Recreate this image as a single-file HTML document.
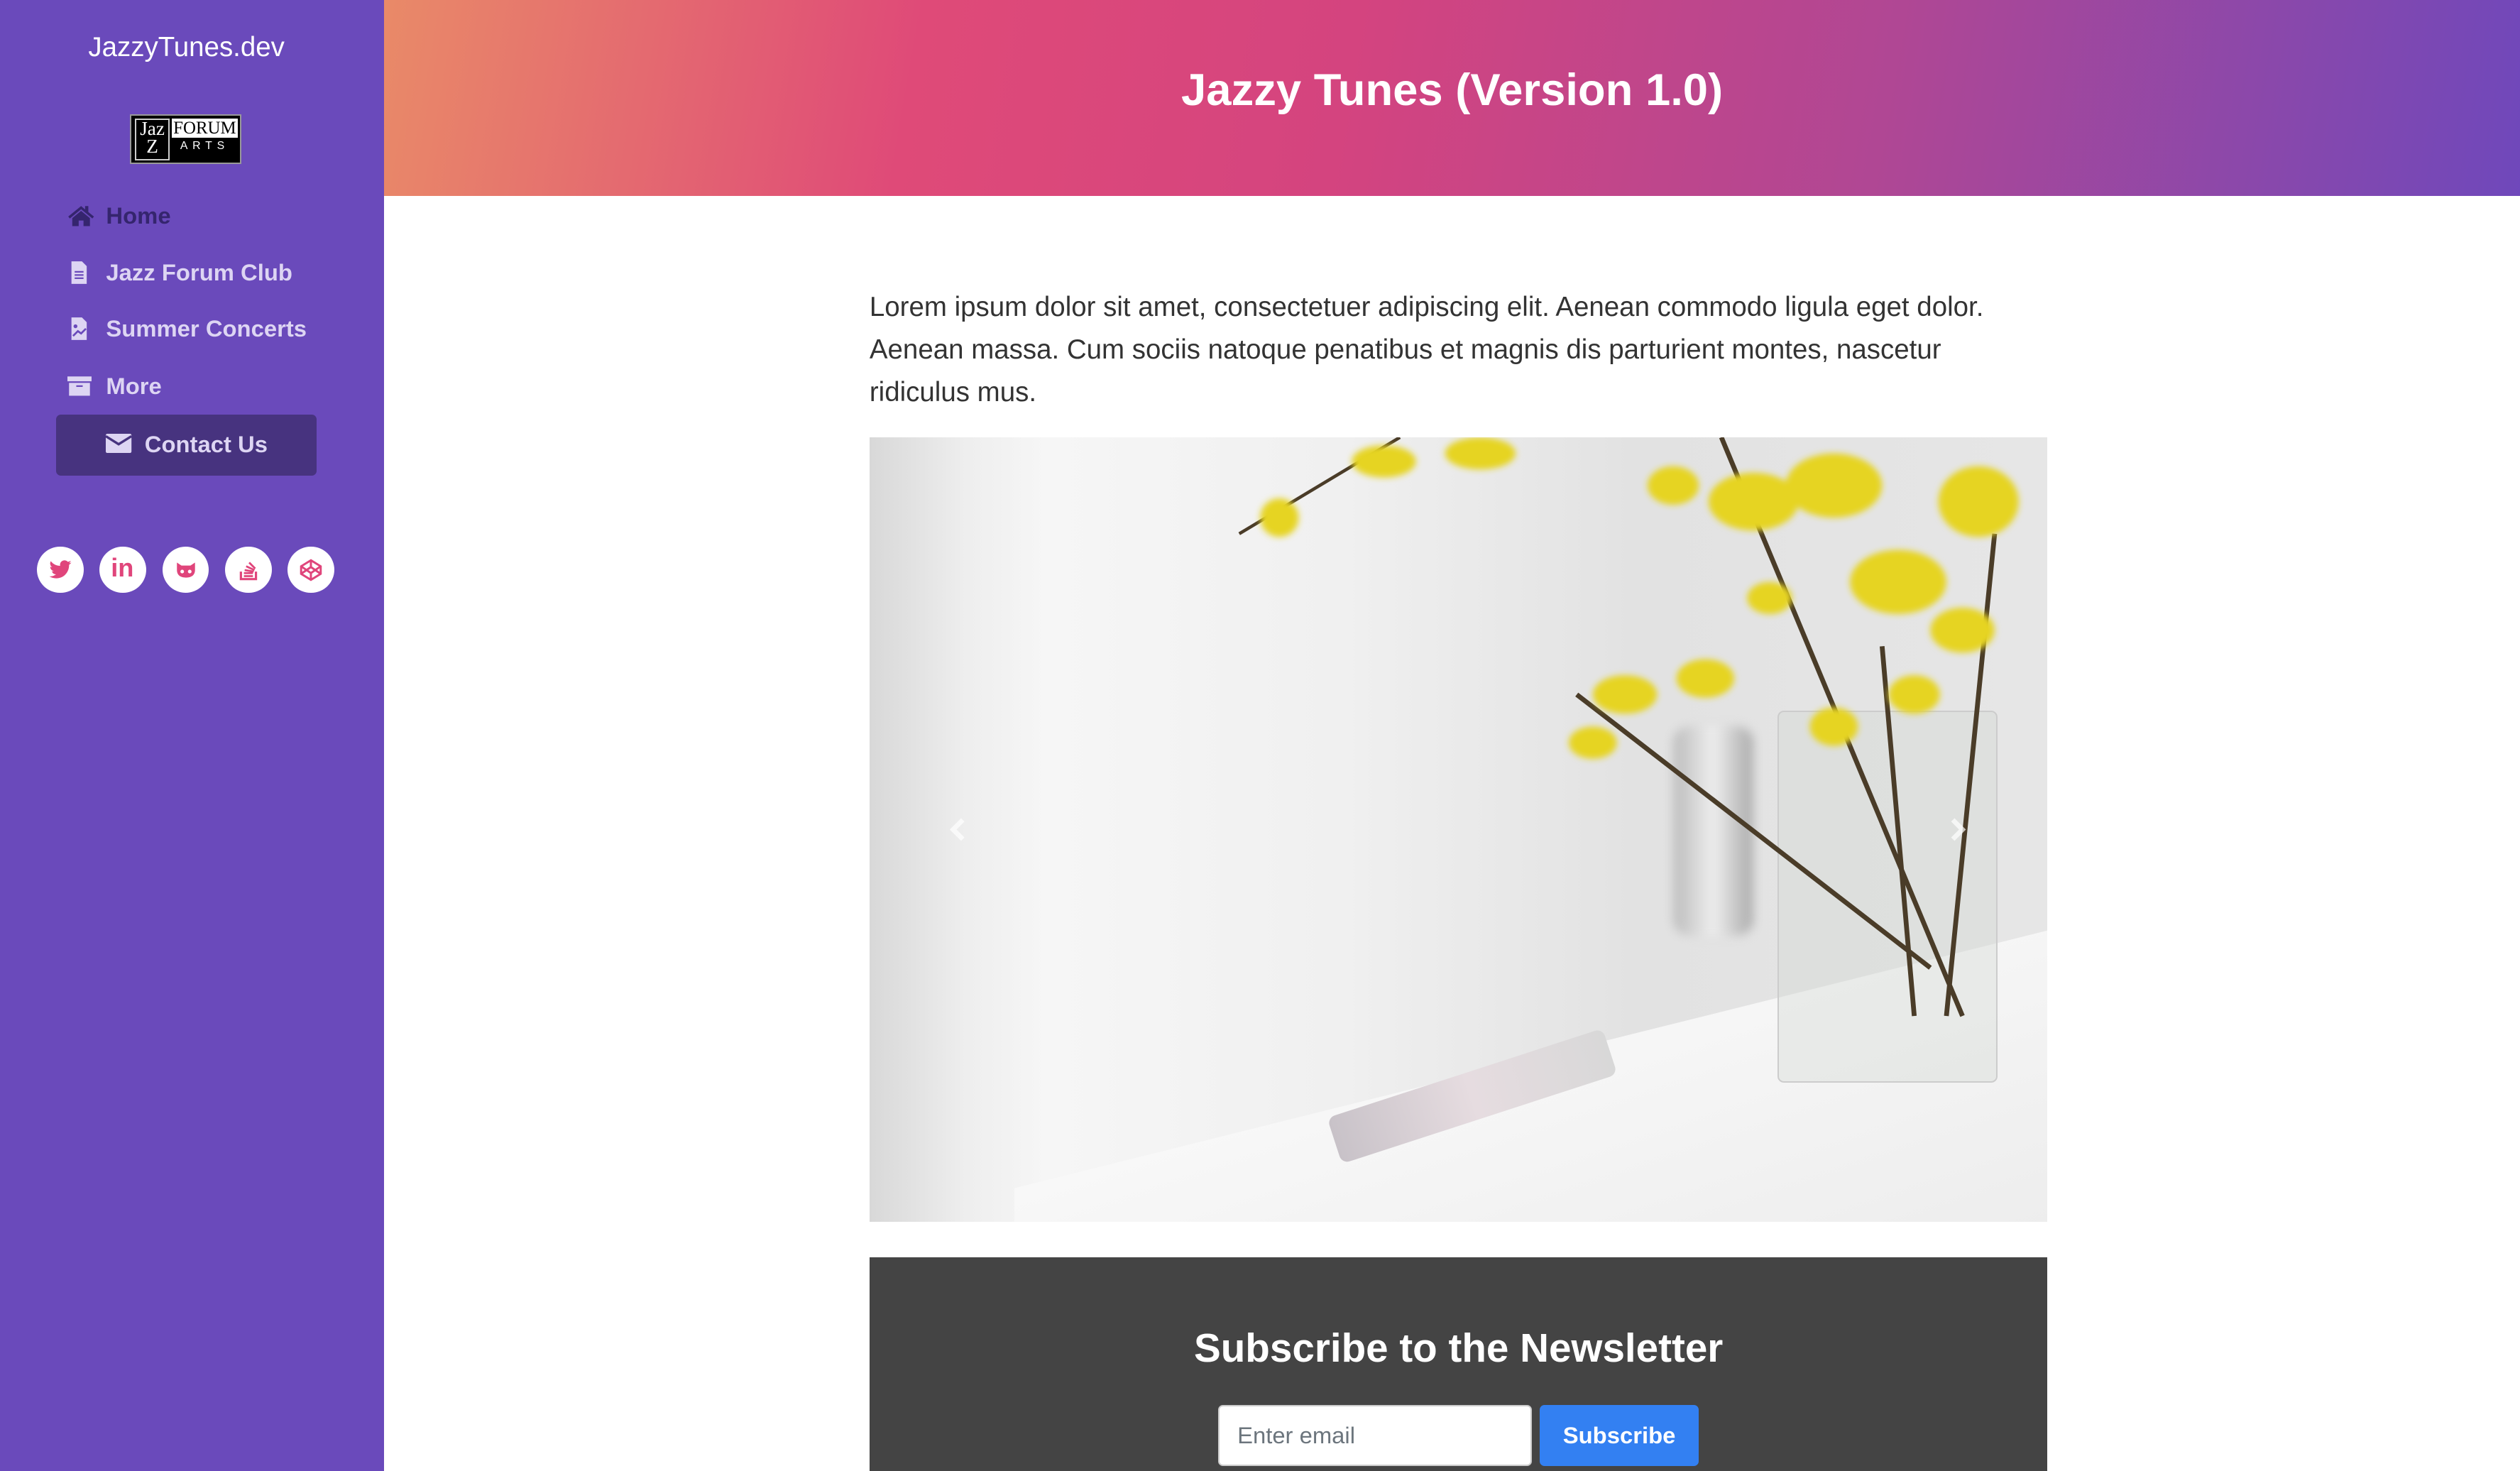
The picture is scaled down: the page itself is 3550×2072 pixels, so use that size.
<!DOCTYPE html>
<html><head><meta charset="utf-8"><style>
html{zoom:2.2641;height:915px;overflow:hidden;background:#fff}
body{margin:0;width:1568px;height:915px;overflow:hidden;font-family:"Liberation Sans",sans-serif;background:#fff;position:relative}
.sb{position:absolute;left:0;top:0;width:239px;height:915px;background:#6a4abb}
.brand{position:absolute;top:20px;width:232px;text-align:center;color:#fff;font-size:17px}
.logo{position:absolute;left:81px;top:71px;width:69px;height:31px;background:#000;border:1px solid #999;box-sizing:border-box}
.nav{position:absolute;left:42px;font-size:14.5px;font-weight:bold;color:#ddd5f3}
.nav svg{position:absolute;left:0;top:1px}
.nav span{position:absolute;left:24px;white-space:nowrap}
.contact{position:absolute;left:35px;top:258px;width:162px;height:38px;background:#47337f;border-radius:3px;color:#ddd5f3;font-weight:bold;font-size:14.5px}
.soc{position:absolute;top:340px;width:29px;height:29px;border-radius:50%;background:#fff}
.soc svg{position:absolute;left:7px;top:7px}
.hdr{position:absolute;left:239px;top:0;width:1329px;height:122px;background:linear-gradient(100deg,#e98a68 0%,#df4a78 25%,#d4447f 45%,#b04794 70%,#6f48bb 100%)}
.hdr h1{margin:0;position:absolute;width:100%;top:40px;text-align:center;color:#fff;font-size:28px}
.txt{position:absolute;left:541px;top:178px;width:720px;font-size:17px;line-height:26.5px;color:#333}
.img{position:absolute;left:541px;top:272px;width:733px;height:488px;overflow:hidden;background:linear-gradient(90deg,#e4e4e4 0%,#f6f6f6 15%,#f0f0f0 40%,#e2e2e2 65%,#e6e6e6 100%)}
.news{position:absolute;left:541px;top:782px;width:733px;height:133px;background:#444}
.news h2{margin:0;position:absolute;top:42px;width:100%;text-align:center;color:#fff;font-size:25px}
.inp{position:absolute;left:217px;top:92px;width:195px;height:38px;background:#fff;border:1px solid #ccc;border-radius:3px;box-sizing:border-box;color:#6c757d;font-size:14.5px;padding:10px 11px}
.btn{position:absolute;left:417px;top:92px;width:99px;height:38px;background:#3380f2;border-radius:3px;color:#fff;font-weight:bold;font-size:14.5px;text-align:center;line-height:38px}
</style></head><body>
<div class="sb">
<div class="brand">JazzyTunes.dev</div>
<div class="logo">
<div style="position:absolute;left:2px;top:2px;width:20px;height:24px;border:1px solid #ccc;color:#fff;font-family:'Liberation Serif',serif;font-size:12px;line-height:11px;text-align:center">Jaz<br>Z</div>
<div style="position:absolute;left:25px;top:2px;width:41px;height:12px;background:#fff;color:#000;font-family:'Liberation Serif',serif;font-size:11px;line-height:12px;text-align:center">FORUM</div>
<div style="position:absolute;left:25px;top:15px;width:41px;color:#fff;font-size:7px;letter-spacing:3px;text-align:center">ARTS</div>
</div>
<div class="nav" style="top:126px;color:#35256e"><svg width="17" height="14" viewBox="0 0 17 14"><path d="M8.5 1L0.5 7.5 1.5 8.7 8.5 3 15.5 8.7 16.5 7.5 13 4.7V1h-2v2.1z M3 8.5V13.5h4v-3.5h3v3.5h4V8.5L8.5 4z" fill="#35256e"/></svg><span>Home</span></div>
<div class="nav" style="top:161px"><svg width="17" height="15" viewBox="0 0 17 15"><path d="M2.5 0.5h6.5l3 3v11h-9.5z" fill="#ddd5f3"/><path d="M4.5 7h5.5M4.5 9h5.5M4.5 11h5.5" stroke="#6a4abb" stroke-width="1"/></svg><span>Jazz Forum Club</span></div>
<div class="nav" style="top:196px"><svg width="17" height="15" viewBox="0 0 17 15"><path d="M2.5 0.5h6.5l3 3v11h-9.5z" fill="#ddd5f3"/><circle cx="5" cy="6" r="1.2" fill="#6a4abb"/><path d="M3.5 12l3-3 2 1.5 3-3" stroke="#6a4abb" stroke-width="1.2" fill="none"/></svg><span>Summer Concerts</span></div>
<div class="nav" style="top:232px"><svg width="17" height="15" viewBox="0 0 17 15"><rect x="0" y="1" width="15" height="3" fill="#ddd5f3"/><rect x="1" y="5" width="13" height="8" fill="#ddd5f3"/><rect x="5.5" y="6.5" width="4" height="1" fill="#6a4abb"/></svg><span>More</span></div>
<div class="contact"><svg style="position:absolute;left:31px;top:12px" width="16" height="12" viewBox="0 0 16 12"><rect x="0" y="0" width="16" height="12" rx="1" fill="#ddd5f3"/><path d="M0 1.5l8 5 8-5" stroke="#47337f" stroke-width="1.5" fill="none"/></svg><span style="position:absolute;left:55px;top:10px">Contact Us</span></div>
<div class="soc" style="left:23px"><svg width="15" height="15" viewBox="0 0 24 24"><path d="M23 4.5a9 9 0 0 1-2.6.7 4.5 4.5 0 0 0 2-2.5 9 9 0 0 1-2.9 1.1A4.5 4.5 0 0 0 11.8 7.9 12.8 12.8 0 0 1 2.5 3.2a4.5 4.5 0 0 0 1.4 6 4.5 4.5 0 0 1-2-.6 4.5 4.5 0 0 0 3.6 4.5 4.5 4.5 0 0 1-2 .1 4.5 4.5 0 0 0 4.2 3.1A9 9 0 0 1 1 18.2 12.8 12.8 0 0 0 7.9 20.2c8.3 0 12.8-6.9 12.8-12.8v-.6A9 9 0 0 0 23 4.5z" fill="#e0457b"/></svg></div>
<div class="soc" style="left:62px"><span style="position:absolute;left:7px;top:4px;color:#e0457b;font-weight:bold;font-size:16px">in</span></div>
<div class="soc" style="left:101px"><svg width="15" height="15" viewBox="0 0 16 16"><path d="M2 3l3 2h6l3-2v5c0 3-2 5-6 5s-6-2-6-5z" fill="#e0457b"/><circle cx="5.5" cy="9" r="1.2" fill="#fff"/><circle cx="10.5" cy="9" r="1.2" fill="#fff"/></svg></div>
<div class="soc" style="left:140px"><svg width="15" height="15" viewBox="0 0 16 16"><path d="M3 9v5h10V9" stroke="#e0457b" stroke-width="1.5" fill="none"/><path d="M5 12h6M5 10h6M5.5 8l6 1M6.5 5.5l5.5 2.5M8.5 3l4 4" stroke="#e0457b" stroke-width="1.3"/></svg></div>
<div class="soc" style="left:179px"><svg width="15" height="15" viewBox="0 0 16 16"><path d="M8 1.5l6.5 4v5L8 14.5 1.5 10.5v-5z M1.5 5.5L8 10l6.5-4.5 M1.5 10.5L8 6l6.5 4.5 M8 1.5V6 M8 10v4.5" stroke="#e0457b" stroke-width="1.4" fill="none"/></svg></div>
</div>
<div class="hdr"><h1>Jazzy Tunes (Version 1.0)</h1></div>
<div class="txt">Lorem ipsum dolor sit amet, consectetuer adipiscing elit. Aenean commodo ligula eget dolor. Aenean massa. Cum sociis natoque penatibus et magnis dis parturient montes, nascetur ridiculus mus.</div>
<div class="img">
<div style="position:absolute;left:0;top:0;width:60px;height:488px;background:linear-gradient(90deg,#d8d8d8,#eeeeee)"></div>
<div style="position:absolute;left:90px;top:380px;width:700px;height:200px;background:linear-gradient(175deg,#f8f8f8,#ececec);transform:skewY(-14deg)"></div>
<div style="position:absolute;left:285px;top:395px;width:180px;height:30px;background:linear-gradient(90deg,#c8c2c8,#e6dce0,#d8d8d8);border-radius:5px;transform:rotate(-18deg)"></div>
<div style="position:absolute;left:565px;top:170px;width:135px;height:230px;background:rgba(210,215,210,.35);border:1px solid #ccc;border-radius:4px"></div>
<div style="position:absolute;left:500px;top:180px;width:50px;height:130px;background:linear-gradient(90deg,#bbb,#eee,#aaa);border-radius:10px;filter:blur(3px)"></div>
<svg style="position:absolute;left:0;top:0" width="733" height="488"><defs><filter id="b"><feGaussianBlur stdDeviation="2"/></filter></defs><g stroke="#4a3c28" stroke-width="3" fill="none"><path d="M680 360L530 0M670 360L700 60M650 360L630 130M660 330L440 160"/><path d="M230 60L330 0" stroke-width="2"/></g>
<g fill="#e6d420" filter="url(#b)">
<ellipse cx="550" cy="40" rx="28" ry="18"/><ellipse cx="600" cy="30" rx="30" ry="20"/><ellipse cx="690" cy="40" rx="25" ry="22"/><ellipse cx="640" cy="90" rx="30" ry="20"/><ellipse cx="500" cy="30" rx="16" ry="12"/><ellipse cx="470" cy="160" rx="20" ry="12"/><ellipse cx="450" cy="190" rx="15" ry="10"/><ellipse cx="520" cy="150" rx="18" ry="12"/><ellipse cx="650" cy="160" rx="16" ry="12"/><ellipse cx="600" cy="180" rx="15" ry="12"/><ellipse cx="320" cy="15" rx="20" ry="10"/><ellipse cx="380" cy="10" rx="22" ry="10"/><ellipse cx="255" cy="50" rx="12" ry="12"/><ellipse cx="680" cy="120" rx="20" ry="14"/><ellipse cx="560" cy="100" rx="14" ry="10"/></g>
<path d="M58 238l-6 6 6 6M674 238l6 6-6 6" stroke="#fff" stroke-width="3" fill="none" opacity=".7"/></svg>
</div>
<div class="news"><h2>Subscribe to the Newsletter</h2><div class="inp">Enter email</div><div class="btn">Subscribe</div></div>
</body></html>
